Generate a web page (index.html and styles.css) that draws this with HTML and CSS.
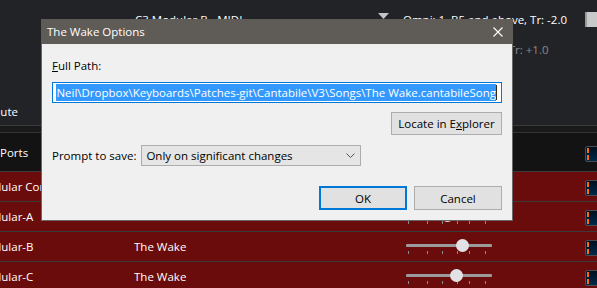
FILE: index.html
```html
<!DOCTYPE html>
<html lang="en">
<head>
  <meta charset="UTF-8" />
  <title>The Wake Options</title>
  <link rel="stylesheet" href="styles.css">
</head>
<body>
  <div class="app">
    <header class="top">
      <div class="route">
        <span class="route-target">C3 Modular B - MIDI</span>
        <svg class="route-arrow" width="11" height="6" viewBox="0 0 11 6">
          <path d="M0 0 L11 0 L5.5 6 Z" fill="#c4c4c4" />
        </svg>
        <span class="route-range">Omni: 1, B5 and above, Tr: -2.0</span>
        <span class="route-toggle"></span>
      </div>
      <div class="route dim">
        <span class="route-target"></span>
        <span></span>
        <span class="route-range">Omni: 16, up to B4, Tr: +1.0</span>
      </div>
      <div class="toolbar"><span class="tool-label">Mute</span></div>
    </header>

    <div class="table">
      <div class="row head">
        <span class="cell name">Ports</span>
        <span class="cell"></span>
        <span class="cell"></span>
        <span class="cell"><span class="meter"></span></span>
      </div>
      <div class="row active">
        <span class="cell name"><span class="clip">Modular Controller</span></span>
        <span class="cell">The Wake</span>
        <span class="cell"><span class="slider"><span class="knob" style="left: 60%"></span></span></span>
        <span class="cell"><span class="meter"></span></span>
      </div>
      <div class="row active">
        <span class="cell name"><span class="clip">Modular-A</span></span>
        <span class="cell"></span>
        <span class="cell"><span class="slider"><span class="knob" style="left: 48%"></span></span></span>
        <span class="cell"><span class="meter"></span></span>
      </div>
      <div class="row active">
        <span class="cell name"><span class="clip">Modular-B</span></span>
        <span class="cell">The Wake</span>
        <span class="cell"><span class="slider"><span class="knob" style="left: 66%"></span></span></span>
        <span class="cell"><span class="meter"></span></span>
      </div>
      <div class="row active">
        <span class="cell name"><span class="clip">Modular-C</span></span>
        <span class="cell">The Wake</span>
        <span class="cell"><span class="slider"><span class="knob" style="left: 59%"></span></span></span>
        <span class="cell"><span class="meter"></span></span>
      </div>
    </div>

    <div class="dialog">
      <div class="dialog-title">
        <span>The Wake Options</span>
        <svg class="close" width="10" height="10" viewBox="0 0 10 10">
          <path d="M0.5 0.5 L9.5 9.5 M9.5 0.5 L0.5 9.5" stroke="#ffffff" stroke-width="1.1" fill="none" />
        </svg>
      </div>
      <div class="dialog-body">
        <label class="field-label"><u>F</u>ull Path:</label>
        <div class="path-box">
          <span class="path-text">Neil\Dropbox\Keyboards\Patches-git\Cantabile\V3\Songs\The Wake.cantabileSong</span>
          <span class="caret"></span>
        </div>
        <div class="locate-row">
          <button class="btn locate">Locate in E<u>x</u>plorer</button>
        </div>
        <div class="prompt-row">
          <span class="prompt-label">Prompt to save:</span>
          <div class="select">
            <span>Only on significant changes</span>
            <svg width="9" height="5" viewBox="0 0 9 5">
              <path d="M0.5 0.5 L4.5 4.5 L8.5 0.5" stroke="#555555" fill="none" />
            </svg>
          </div>
        </div>
        <div class="button-row">
          <button class="btn default">OK</button>
          <button class="btn">Cancel</button>
        </div>
      </div>
    </div>
  </div>
</body>
</html>
```

FILE: styles.css
```css
body {
  margin: 0;
  background: #222327;
}

.app {
  position: relative;
  width: 597px;
  height: 288px;
  overflow: hidden;
  background: #222327;
  color: #ffffff;
  font-family: 'Open Sans', sans-serif;
  font-size: 11.5px;
}

/* background: bindings area */
.top {
  height: 125px;
  display: flex;
  flex-direction: column;
  border-bottom: 1px solid #3a3a3c;
}

.route {
  display: grid;
  grid-template-columns: 243px 25px 182px 12px;
  align-items: center;
  height: 16px;
  margin-top: 11px;
  padding-left: 135px;
  white-space: nowrap;
}

.route.dim {
  margin-top: 14px;
  color: #8a8a8a;
}

.route-arrow {
  align-self: start;
  margin-top: 2px;
}

.route-range {
  overflow: hidden;
}

.route-toggle {
  align-self: start;
  margin-top: 1px;
  width: 12px;
  height: 15px;
  background: #c9c9c9;
  border-left: 2px solid #9a9a9a;
  box-sizing: border-box;
}

.toolbar {
  margin-top: auto;
  height: 28px;
  display: flex;
  align-items: center;
}

.tool-label {
  margin-left: -10px;
}

/* background: ports table */
.table {
  border-top: 6px solid #1a1a1b;
}

.row {
  display: grid;
  grid-template-columns: 134px 272px 179px 1fr;
  align-items: center;
  height: 29px;
  border-bottom: 1px solid #3b3b3b;
}

.row.head {
  height: 38px;
  background: #131313;
  border-top: 1px solid #333335;
  border-bottom: 1px solid #3a3a3a;
}

.row.active {
  background: #6a0c0c;
}

.cell {
  white-space: nowrap;
  overflow: hidden;
}

.clip {
  display: inline-block;
  margin-left: -23px;
}

.slider {
  position: relative;
  display: block;
  width: 86px;
  height: 16px;
  margin-top: 2px;
}

.slider::before {
  content: "";
  position: absolute;
  left: 0;
  right: 0;
  top: 4px;
  height: 3px;
  background: #9b9b9b;
  border-radius: 1px;
}

.slider::after {
  content: "";
  position: absolute;
  left: 0;
  right: 0;
  top: 11px;
  height: 3px;
  background:
    linear-gradient(#8c8c8c, #8c8c8c) 2px 0 / 1px 3px no-repeat,
    linear-gradient(#8c8c8c, #8c8c8c) 21px 0 / 1px 3px no-repeat,
    linear-gradient(#8c8c8c, #8c8c8c) 36px 0 / 1px 3px no-repeat,
    linear-gradient(#8c8c8c, #8c8c8c) 51px 0 / 1px 3px no-repeat,
    linear-gradient(#8c8c8c, #8c8c8c) 63px 0 / 1px 3px no-repeat,
    linear-gradient(#8c8c8c, #8c8c8c) 79px 0 / 1px 3px no-repeat;
}

.knob {
  position: absolute;
  top: -1px;
  width: 13px;
  height: 13px;
  margin-left: -6.5px;
  border-radius: 50%;
  background: #e2e2e6;
  z-index: 1;
}

.meter {
  display: block;
  width: 16px;
  height: 16px;
  box-sizing: border-box;
  margin-top: 3px;
  border: 1px solid #4c4c4e;
  border-radius: 2px;
  background:
    linear-gradient(#ff6a10, #ff6a10) 1px 1px / 2px 5px no-repeat,
    linear-gradient(#ff6a10, #ff6a10) 1px 8px / 2px 5px no-repeat,
    linear-gradient(#00101e, #002a4a);
}

/* dialog */
.dialog {
  position: absolute;
  z-index: 5;
  left: 41px;
  top: 19px;
  width: 472px;
  height: 202px;
  box-sizing: border-box;
  border: 1px solid #6a6866;
  border-top: none;
  background: #f0f0f0;
  color: #000000;
  font-size: 11.5px;
  display: flex;
  flex-direction: column;
}

.dialog-title {
  height: 25px;
  margin: 0 -1px;
  padding: 0 10px 0 6px;
  background: #5f5b57;
  color: #ffffff;
  display: flex;
  align-items: center;
  justify-content: space-between;
}

.dialog-body {
  flex: 1;
  display: flex;
  flex-direction: column;
  padding: 0 10px 10px 10px;
}

.field-label {
  margin-top: 14px;
  height: 16px;
  line-height: 16px;
}

.path-box {
  margin-top: 8px;
  height: 21px;
  box-sizing: border-box;
  border: 1px solid #0078d7;
  background: #ffffff;
  display: flex;
  align-items: center;
  justify-content: flex-end;
  padding: 0 4px 0 4px;
  overflow: hidden;
}

.path-text {
  white-space: nowrap;
  background: #3399ff;
  color: #ffffff;
  line-height: 17px;
}

.caret {
  flex: none;
  width: 1px;
  height: 15px;
  background: #3a2a10;
}

.locate-row {
  margin-top: 9px;
  display: flex;
  justify-content: flex-end;
}

.btn {
  font-family: 'Open Sans', sans-serif;
  font-size: 11.5px;
  color: #000000;
  background: #e1e1e1;
  border: 1px solid #adadad;
  height: 24px;
  width: 88px;
  padding: 0;
}

.btn.locate {
  width: 111px;
  height: 23px;
}

.btn.default {
  border: 2px solid #0078d7;
}

.prompt-row {
  margin-top: 10px;
  display: flex;
  align-items: center;
  gap: 5px;
}

.select {
  width: 220px;
  height: 21px;
  box-sizing: border-box;
  border: 1px solid #adadad;
  background: #e5e5e5;
  display: flex;
  align-items: center;
  justify-content: space-between;
  padding: 0 5px 0 4px;
}

.button-row {
  margin-top: auto;
  display: flex;
  justify-content: flex-end;
  gap: 7px;
}
```
